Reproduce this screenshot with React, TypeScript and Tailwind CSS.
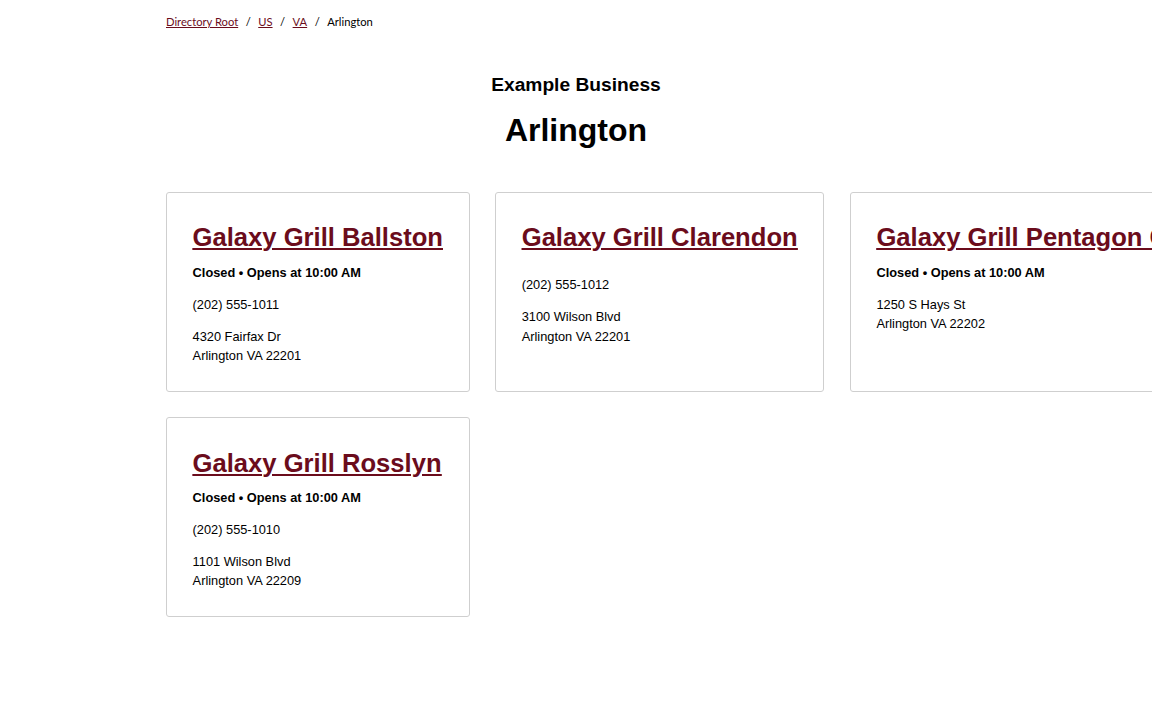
import React from 'react';

type Location = {
  name: string;
  status?: string;
  phone?: string;
  street: string;
  city: string;
};

const locations: Location[] = [
  {
    name: 'Galaxy Grill Ballston',
    status: 'Closed • Opens at 10:00 AM',
    phone: '(202) 555-1011',
    street: '4320 Fairfax Dr',
    city: 'Arlington VA 22201',
  },
  {
    name: 'Galaxy Grill Clarendon',
    phone: '(202) 555-1012',
    street: '3100 Wilson Blvd',
    city: 'Arlington VA 22201',
  },
  {
    name: 'Galaxy Grill Pentagon City',
    status: 'Closed • Opens at 10:00 AM',
    street: '1250 S Hays St',
    city: 'Arlington VA 22202',
  },
  {
    name: 'Galaxy Grill Rosslyn',
    status: 'Closed • Opens at 10:00 AM',
    phone: '(202) 555-1010',
    street: '1101 Wilson Blvd',
    city: 'Arlington VA 22209',
  },
];

const LocationCard: React.FC<{ loc: Location }> = ({ loc }) => (
  <div className="flex flex-col border border-[#cfcfcf] rounded-[3px] p-[25.6px] bg-white">
    <h2 className="text-[25.6px] leading-[1.5] font-bold text-[#6b0c1c] underline underline-offset-[2px] decoration-[1.5px] mb-[6px] whitespace-nowrap">
      <a href="#">{loc.name}</a>
    </h2>
    {/* hours line stays even when empty, keeps the spacing */}
    <div className="font-bold mb-[12.8px]">{loc.status}</div>
    {loc.phone && <div className="mb-[12.8px]">{loc.phone}</div>}
    <div>
      <div>{loc.street}</div>
      <div>{loc.city}</div>
    </div>
  </div>
);

export default function App() {
  return (
    <div className="min-h-screen bg-white overflow-hidden text-black font-['Liberation_Sans',Arial,sans-serif] text-[12.8px] leading-[19.2px]">
      <div className="w-[820px] mx-auto">
        <nav className="pt-[12.4px] flex items-center gap-[7.5px] text-[11.2px] font-['Lato','Liberation_Sans',sans-serif]">
          <a href="#" className="text-[#6b0c1c] underline">Directory Root</a>
          <span>/</span>
          <a href="#" className="text-[#6b0c1c] underline">US</a>
          <span>/</span>
          <a href="#" className="text-[#6b0c1c] underline">VA</a>
          <span>/</span>
          <span>Arlington</span>
        </nav>
        <header className="text-center mt-[42px]">
          <div className="text-[19.2px] leading-[22px] font-bold">Example Business</div>
          <h1 className="text-[32px] leading-[37px] font-bold mt-[16.5px]">Arlington</h1>
        </header>
        <div className="grid grid-cols-[auto_auto_auto] justify-start gap-[25.6px] mt-[42.5px]">
          {locations.map((loc) => (
            <LocationCard key={loc.name} loc={loc} />
          ))}
        </div>
      </div>
    </div>
  );
}
